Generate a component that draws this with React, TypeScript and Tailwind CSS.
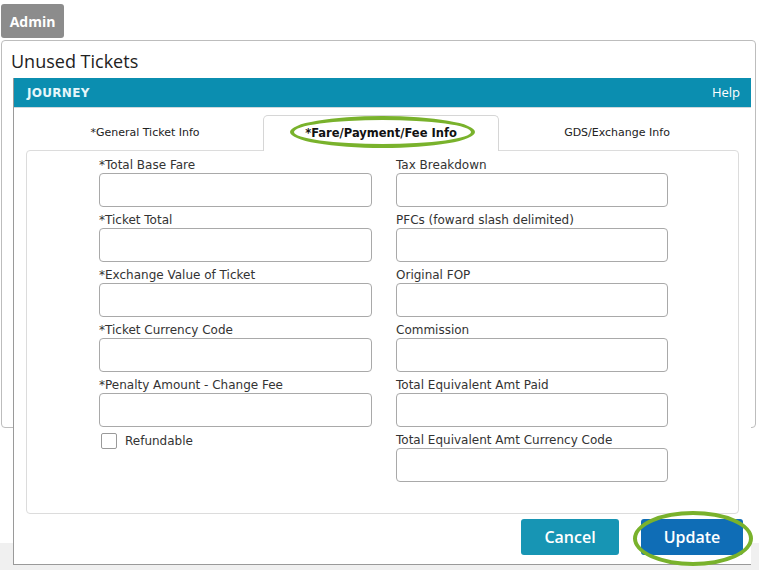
import React from "react";

const left = [
  "*Total Base Fare",
  "*Ticket Total",
  "*Exchange Value of Ticket",
  "*Ticket Currency Code",
  "*Penalty Amount - Change Fee",
];
const right = [
  "Tax Breakdown",
  "PFCs (foward slash delimited)",
  "Original FOP",
  "Commission",
  "Total Equivalent Amt Paid",
  "Total Equivalent Amt Currency Code",
];

function Field({ label }: { label: string }) {
  return (
    <div className="flex flex-col mb-[5px]">
      <div className="h-[16px] leading-[16px] text-[12px] text-[#333] whitespace-nowrap">{label}</div>
      <div className="h-[34px] border border-[#a9a9a9] rounded-[4px] bg-white" />
    </div>
  );
}

export default function App() {
  return (
    <div
      className="relative w-[759px] h-[570px] overflow-hidden bg-white"
      style={{ fontFamily: '"DejaVu Sans", Verdana, sans-serif' }}
    >
      {/* background page */}
      <div className="flex flex-col h-full">
        <div className="pl-[1px] pt-[4px]">
          <div
            className="w-[63px] h-[34px] bg-[#8c8c8c] rounded-[3px] text-white font-bold text-[14px] flex items-center justify-center"
            style={{ fontFamily: '"Open Sans", sans-serif' }}
          >
            Admin
          </div>
        </div>
        <div className="ml-[1px] mt-[2px] w-[755px] h-[388px] border border-[#bdbdbd] rounded-[4px]">
          <div
            className="pl-[9px] pt-[9px] text-[18px] text-[#222] leading-[22px]"
            style={{ fontFamily: '"Open Sans", sans-serif' }}
          >
            Unused Tickets
          </div>
        </div>
        <div className="flex-1" />
        <div className="h-[27px] bg-[#f0f0f0]" />
      </div>

      {/* modal */}
      <div className="absolute left-[13px] top-[78px] w-[738px] h-[487px] bg-white border-l border-b border-[#9a9a9a] flex flex-col">
        <div className="h-[30px] bg-[#0b8eb0] border-b border-[#cfd8dc] flex items-center justify-between pl-[13px] pr-[11px]">
          <span className="text-[12px] font-bold text-[#e6f6fa] tracking-[0.3px]">JOURNEY</span>
          <span
            className="text-[13px] text-white"
            style={{ fontFamily: '"Open Sans", sans-serif' }}
          >
            Help
          </span>
        </div>

        <div className="ml-[13px] mt-[7px] w-[708px] grid grid-cols-3 h-[35px] relative z-10">
          <div className="flex items-center justify-center text-[11px] text-[#222]">*General Ticket Info</div>
          <div className="flex items-center justify-center text-[11.5px] text-[#111] font-bold border border-b-0 border-[#d6d6d6] rounded-t-[5px] bg-white h-[36px]">
            *Fare/Payment/Fee Info
          </div>
          <div className="flex items-center justify-center text-[11px] text-[#222]">GDS/Exchange Info</div>
        </div>

        <div className="ml-[12px] w-[713px] h-[364px] border border-[#dcdcdc] rounded-[4px] pt-[6px] pl-[72px] flex gap-[24px]">
          <div className="w-[273px] flex flex-col">
            {left.map((l) => (
              <Field key={l} label={l} />
            ))}
            <div className="flex items-center gap-[8px] ml-[2px]">
              <div className="w-[16px] h-[16px] border border-[#9a9a9a] rounded-[2px] bg-white" />
              <span className="text-[12px] text-[#333]">Refundable</span>
            </div>
          </div>
          <div className="w-[272px] flex flex-col">
            {right.map((l) => (
              <Field key={l} label={l} />
            ))}
          </div>
        </div>

        <div className="flex justify-end gap-[22px] mt-[5px] pr-[8px]">
          <button
            className="w-[98px] h-[36px] bg-[#1795b4] rounded-[3px] text-white font-semibold text-[16px]"
            style={{ fontFamily: '"Open Sans", sans-serif' }}
          >
            Cancel
          </button>
          <button
            className="w-[102px] h-[36px] bg-[#0f6db6] rounded-[3px] text-white font-semibold text-[16px]"
            style={{ fontFamily: '"Open Sans", sans-serif' }}
          >
            Update
          </button>
        </div>
      </div>

      {/* annotations */}
      <div className="absolute left-[290px] top-[116px] w-[185px] h-[32px] rounded-[50%] border-[4px] border-[#79b22c] z-20" />
      <div className="absolute left-[633px] top-[511px] w-[120px] h-[55px] rounded-[50%] border-[4px] border-[#79b22c] z-20" />
    </div>
  );
}
